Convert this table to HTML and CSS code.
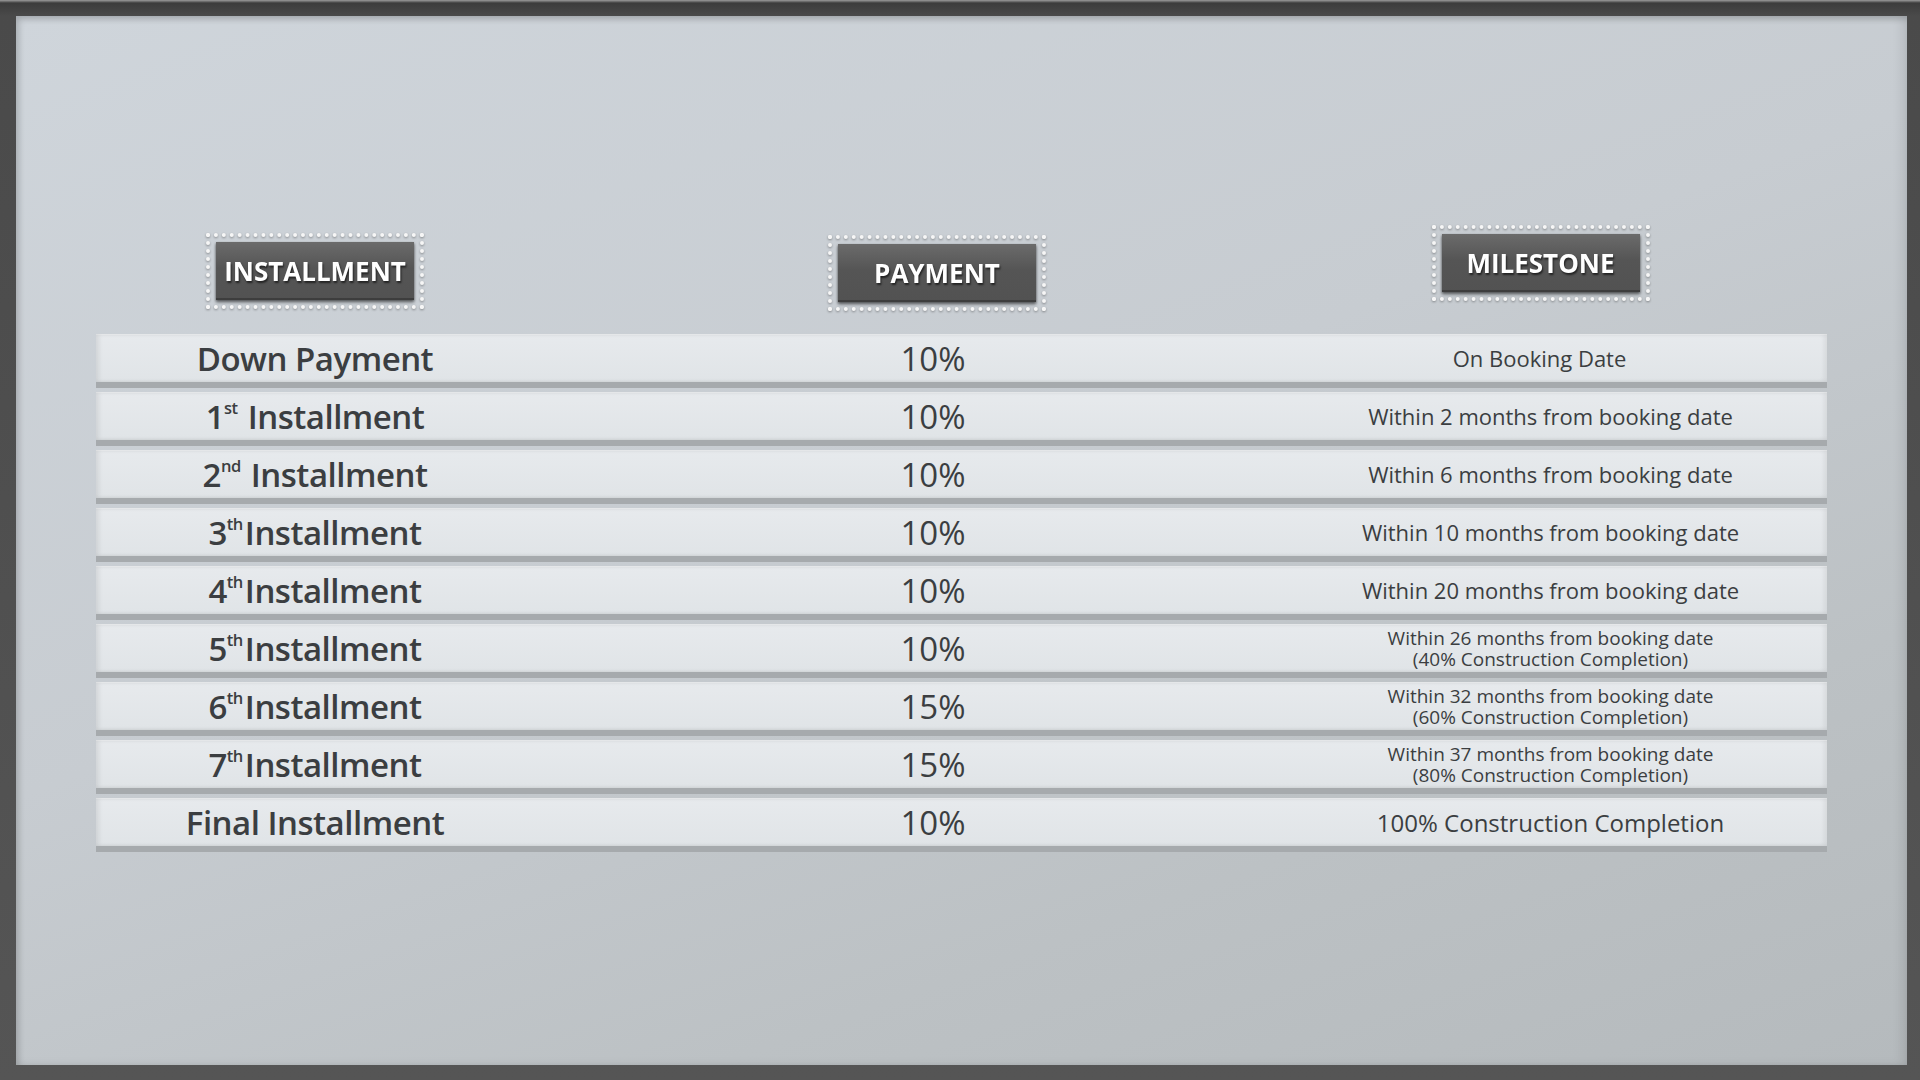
FILE: index.html
```html
<!DOCTYPE html>
<html lang="en">
<head>
  <meta charset="UTF-8">
  <meta name="viewport" content="width=device-width, initial-scale=1.0">
  <title>Payment Plan</title>
  <link rel="stylesheet" href="styles.css">
</head>
<body>
  <!-- 外框 -->
  <div class="frame">
    <div class="panel">

      <!-- 表头 -->
      <div class="head">
        <div class="badge badge-install"><span class="badge-inner">INSTALLMENT</span></div>
        <div class="badge badge-pay"><span class="badge-inner">PAYMENT</span></div>
        <div class="badge badge-mile"><span class="badge-inner">MILESTONE</span></div>
      </div>

      <!-- 付款计划行 -->
      <div class="plan">
        <div class="row">
          <div class="name">Down Payment</div>
          <div class="pay">10%</div>
          <div class="note note-first">On Booking Date</div>
        </div>
        <div class="row">
          <div class="name">1<sup>st</sup> Installment</div>
          <div class="pay">10%</div>
          <div class="note">Within 2 months from booking date</div>
        </div>
        <div class="row">
          <div class="name">2<sup>nd</sup> Installment</div>
          <div class="pay">10%</div>
          <div class="note">Within 6 months from booking date</div>
        </div>
        <div class="row">
          <div class="name">3<sup>th</sup>Installment</div>
          <div class="pay">10%</div>
          <div class="note">Within 10 months from booking date</div>
        </div>
        <div class="row">
          <div class="name">4<sup>th</sup>Installment</div>
          <div class="pay">10%</div>
          <div class="note">Within 20 months from booking date</div>
        </div>
        <div class="row">
          <div class="name">5<sup>th</sup>Installment</div>
          <div class="pay">10%</div>
          <div class="note note-small">
            <div>Within 26 months from booking date</div>
            <div>(40% Construction Completion)</div>
          </div>
        </div>
        <div class="row">
          <div class="name">6<sup>th</sup>Installment</div>
          <div class="pay">15%</div>
          <div class="note note-small">
            <div>Within 32 months from booking date</div>
            <div>(60% Construction Completion)</div>
          </div>
        </div>
        <div class="row">
          <div class="name">7<sup>th</sup>Installment</div>
          <div class="pay">15%</div>
          <div class="note note-small">
            <div>Within 37 months from booking date</div>
            <div>(80% Construction Completion)</div>
          </div>
        </div>
        <div class="row">
          <div class="name">Final Installment</div>
          <div class="pay">10%</div>
          <div class="note note-big">100% Construction Completion</div>
        </div>
      </div>

    </div>
  </div>
</body>
</html>
```

FILE: styles.css
```css
/* 页面 */
html, body {
  margin: 0;
  padding: 0;
  background-color: #4d4d4d;
  font-family: "Open Sans", "Liberation Sans", Arial, sans-serif;
}

/* 深色外框 */
.frame {
  width: 1920px;
  height: 1080px;
  box-sizing: border-box;
  padding: 16px 13px 15px 16px;
  background: linear-gradient(#9c9c9c 0, #3c3c3c 3px, #4a4a4a 16px, #555 100%);
}

/* 浅色面板 */
.panel {
  height: 100%;
  box-sizing: border-box;
  padding: 209px 80px 0 80px;
  background: linear-gradient(160deg, #cfd5db 0%, #c7ccd1 45%, #bcc1c4 75%, #b5babd 100%);
  box-shadow: inset 3px 3px 6px rgba(0, 0, 0, 0.18), inset -6px 0 10px rgba(0, 0, 0, 0.08);
}

/* 表头 */
.head {
  display: grid;
  grid-template-columns: 438px 798px 1fr;
  height: 109px;
}

.badge {
  justify-self: center;
  align-self: start;
  padding: 5px 6px;
  border: 4px dotted #f6f6f6;
  filter: drop-shadow(0 1px 1px rgba(0, 0, 0, 0.35));
}

.badge-install {
  margin-top: 8px;
}

.badge-pay {
  margin-top: 10px;
  margin-left: 8px;
}

.badge-mile {
  margin-top: 0;
  margin-right: 78px;
}

.badge-inner {
  display: block;
  width: 198px;
  height: 58px;
  line-height: 58px;
  text-align: center;
  font-size: 26px;
  font-weight: 700;
  color: #fff;
  background: linear-gradient(#6b6b6b, #555 45%, #525252);
  box-shadow: 0 2px 3px rgba(0, 0, 0, 0.4), inset 0 -2px 0 rgba(0, 0, 0, 0.25);
  text-shadow: 1px 2px 2px rgba(0, 0, 0, 0.6);
}

/* 行 */
.row {
  display: grid;
  grid-template-columns: 438px 798px 1fr;
  align-items: center;
  height: 48px;
  margin-bottom: 4px;
  background: linear-gradient(#e7eaed, #e0e4e7);
  border-bottom: 6px solid #a6aaad;
  box-shadow: inset 3px 0 4px rgba(0, 0, 0, 0.08), inset -3px 0 4px rgba(0, 0, 0, 0.06), inset 0 1px 0 #f3f5f7;
  color: #3b3e41;
}

.name {
  text-align: center;
  font-size: 33px;
  font-weight: 600;
  letter-spacing: -0.5px;
  white-space: nowrap;
}

.name sup {
  font-size: 0.5em;
  vertical-align: 0.9em;
  line-height: 0;
  margin-right: 2px;
}

.pay {
  text-align: center;
  font-size: 33px;
  font-weight: 400;
}

.note {
  text-align: center;
  padding-right: 58px;
  font-size: 22px;
  white-space: nowrap;
}

.note-first {
  padding-right: 80px;
}

.note-small {
  font-size: 19px;
  line-height: 21px;
  padding-top: 2px;
}

.note-big {
  font-size: 24px;
}
```
